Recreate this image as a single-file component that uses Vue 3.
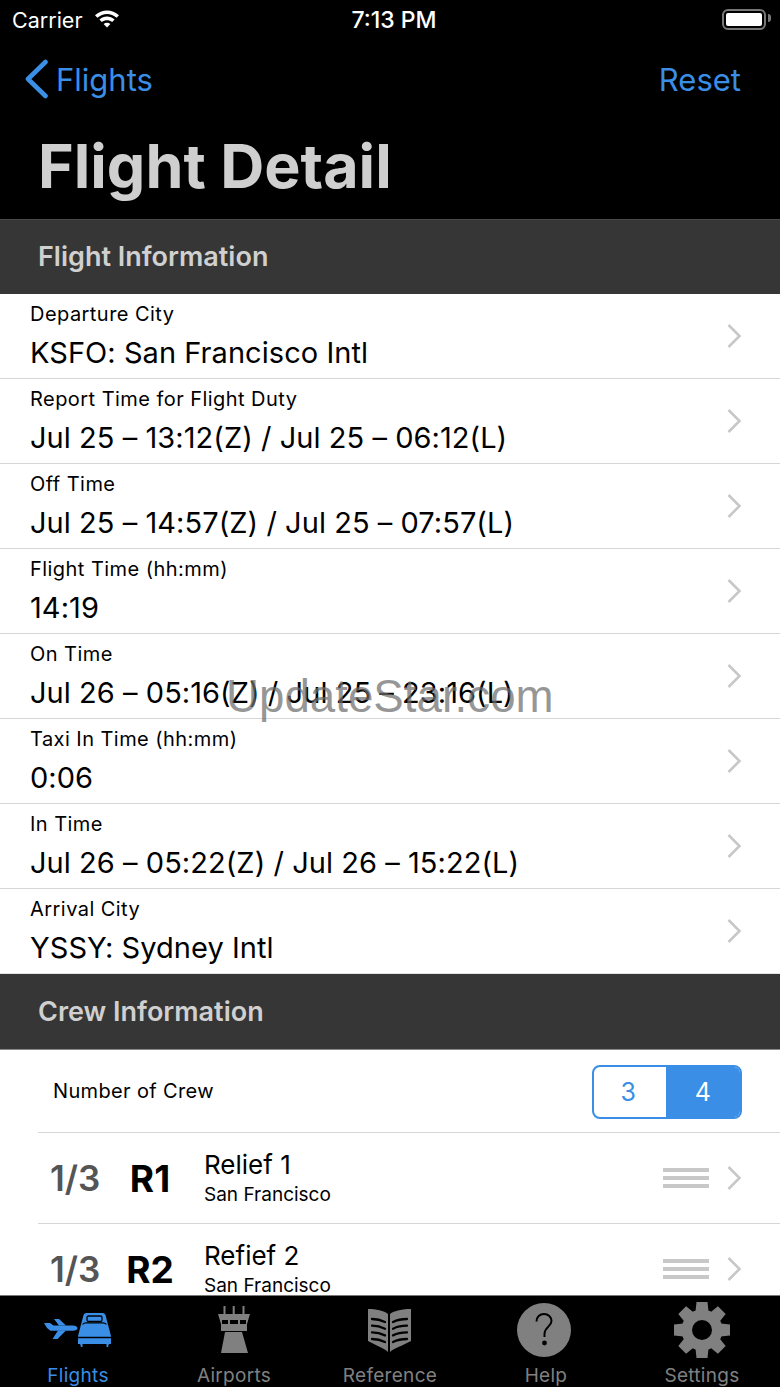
<script setup>
const flightRows = [
  { label: 'Departure City', value: 'KSFO: San Francisco Intl' },
  { label: 'Report Time for Flight Duty', value: 'Jul 25 – 13:12(Z) / Jul 25 – 06:12(L)' },
  { label: 'Off Time', value: 'Jul 25 – 14:57(Z) / Jul 25 – 07:57(L)' },
  { label: 'Flight Time (hh:mm)', value: '14:19' },
  { label: 'On Time', value: 'Jul 26 – 05:16(Z) / Jul 25 – 23:16(L)' },
  { label: 'Taxi In Time (hh:mm)', value: '0:06' },
  { label: 'In Time', value: 'Jul 26 – 05:22(Z) / Jul 26 – 15:22(L)' },
  { label: 'Arrival City', value: 'YSSY: Sydney Intl' }
]
const crew = [
  { frac: '1/3', code: 'R1', name: 'Relief 1', city: 'San Francisco' },
  { frac: '1/3', code: 'R2', name: 'Refief 2', city: 'San Francisco' }
]
const gearTeeth = [0, 45, 90, 135, 180, 225, 270, 315]
</script>

<template>
  <div class="screen">
    <header class="top">
      <div class="status">
        <div class="status-left">
          <span>Carrier</span>
          <svg class="wifi" viewBox="0 0 26 20" width="26" height="20">
            <path d="M1 7.2C7.8.8 18.2.8 25 7.2l-2.4 2.5C17.1 4.6 8.9 4.6 3.4 9.7z" fill="#fff"/>
            <path d="M5.4 11.6c4.4-4 10.8-4 15.2 0l-2.4 2.5c-3.1-2.6-7.3-2.6-10.4 0z" fill="#fff"/>
            <path d="M9.6 15.9c2-1.5 4.8-1.5 6.8 0L13 19.4z" fill="#fff"/>
          </svg>
        </div>
        <span class="clock">7:13 PM</span>
        <div class="battery"><i></i></div>
      </div>
      <div class="nav">
        <div class="back">
          <svg viewBox="0 0 26 40" width="26" height="40">
            <path d="M22.5 3 5 20l17.5 17" fill="none" stroke="#3a8ee6" stroke-width="4.6" stroke-linecap="round" stroke-linejoin="round"/>
          </svg>
          <span>Flights</span>
        </div>
        <span class="reset">Reset</span>
      </div>
      <h1>Flight Detail</h1>
    </header>

    <main class="content">
      <div class="section">Flight Information</div>
      <ul class="rows">
        <li v-for="r in flightRows" :key="r.label" class="row">
          <div class="row-text">
            <div class="row-label">{{ r.label }}</div>
            <div class="row-value">{{ r.value }}</div>
          </div>
          <svg class="chev" viewBox="0 0 16 26" width="16" height="26"><path d="M2.5 2 13.5 13 2.5 24" fill="none" stroke="#c8c8c8" stroke-width="2.6"/></svg>
        </li>
      </ul>

      <div class="section section-crew">Crew Information</div>
      <div class="crew-count">
        <span>Number of Crew</span>
        <div class="seg">
          <span class="seg-off">3</span>
          <span class="seg-on">4</span>
        </div>
      </div>
      <div v-for="c in crew" :key="c.code" class="crew-row">
        <span class="frac">{{ c.frac }}</span>
        <span class="code">{{ c.code }}</span>
        <div class="crew-text">
          <div class="crew-name">{{ c.name }}</div>
          <div class="crew-city">{{ c.city }}</div>
        </div>
        <div class="grip"><i></i><i></i><i></i></div>
        <svg class="chev" viewBox="0 0 16 26" width="16" height="26"><path d="M2.5 2 13.5 13 2.5 24" fill="none" stroke="#c8c8c8" stroke-width="2.6"/></svg>
      </div>
    </main>

    <nav class="tabs">
      <div class="tab active">
        <div class="icon">
          <svg viewBox="0 0 68 34" width="68" height="34">
            <g fill="#3a8ee6">
              <path d="M0 10h6l3.500 2.500H29c2.500 0 4.500 1.300 4.500 2.700s-2 2.500-4.500 2.500H6.500L3 15z"/>
              <path d="M10 6h5l7 6.500h-7z"/>
              <path d="M14 17.500h8L13.500 26H8.500z"/>
              <path d="M42.500 0h16c1.600 0 2.700 1 3.100 2.500L67 23v8H34v-8l5.400-20.500C39.800 1 40.900 0 42.500 0z"/>
              <path d="M36 30.500h2.500V34H37zM62.500 30.500H65L64 34h-1.500z"/>
            </g>
            <rect x="43" y="3" width="15" height="5.500" rx="1.500" fill="none" stroke="#000" stroke-width="1.300"/>
            <path d="M38.500 11.500c1.200-1.500 2.300-1.700 3.500-1.700h17c1.200 0 2.300.2 3.500 1.700" fill="none" stroke="#000" stroke-width="1.200"/>
            <path d="M34 24.500h33" stroke="#000" stroke-width="1.300"/>
          </svg>
        </div>
        <span>Flights</span>
      </div>
      <div class="tab">
        <div class="icon">
          <svg viewBox="0 0 36 48" width="36" height="48">
            <path d="M7.800 0h2v8h-2zM17 0h2v8h-2zM26.800 0h2v8h-2z" transform="translate(-.3)" fill="#808080"/>
            <path d="M2 8h32l-3 10v7H5v-7z" fill="#808080"/>
            <path d="M6 14h6v4H6zM14 14h8v4h-8zM24 14h6v4h-6z" fill="#000"/>
            <path d="M9 26h17l6 21H5z" fill="#808080"/>
          </svg>
        </div>
        <span>Airports</span>
      </div>
      <div class="tab">
        <div class="icon">
          <svg viewBox="0 0 46 44" width="46" height="44">
            <path d="M1 1c8 0 16 1.500 20 5v38c-4-4-12-6.500-20-11z" fill="#808080"/>
            <path d="M23 6c4-3.500 13-5 21-5v32c-8 4.500-17 7-21 11z" fill="#808080"/>
            <g fill="none" stroke="#000" stroke-width="2.300" stroke-linecap="round">
              <path d="M5 11c5 0 9 1 13 3M5 17.700c5 0 9 1 13 3M5 24.400c5 0 9 1 13 3M5 31c5 0 9 1 13 3"/>
              <path d="M40 11c-5 0-10 1-14 3M40 17.700c-5 0-10 1-14 3M40 24.400c-5 0-10 1-14 3M40 31c-5 0-10 1-14 3"/>
            </g>
          </svg>
        </div>
        <span>Reference</span>
      </div>
      <div class="tab">
        <div class="icon icon-help">
          <svg viewBox="0 0 54 54" width="54" height="54">
            <circle cx="27" cy="27" r="27" fill="#808080"/>
            <path d="M19.500 18.500c0-4.500 3.300-7.500 7.500-7.500s7.500 3 7.500 7c0 5.500-7 6-7 13v3" fill="none" stroke="#000" stroke-width="2"/>
            <circle cx="27.500" cy="40" r="2.400" fill="#000"/>
          </svg>
        </div>
        <span>Help</span>
      </div>
      <div class="tab">
        <div class="icon">
          <svg viewBox="0 0 58 58" width="58" height="58">
            <g fill="#808080">
              <path v-for="t in gearTeeth" :key="t" d="M23.500 1h11l1.500 14H22z" :transform="`rotate(${t} 29 29)`"/>
            </g>
            <circle cx="29" cy="29" r="20.500" fill="#808080"/>
            <circle cx="29" cy="29" r="10" fill="#000"/>
          </svg>
        </div>
        <span>Settings</span>
      </div>
    </nav>

    <div class="watermark">UpdateStar.com</div>
  </div>
</template>

<style>
html, body { margin: 0; background: #000; }
</style>

<style scoped>
.screen {
  position: relative;
  width: 780px;
  height: 1387px;
  overflow: hidden;
  display: flex;
  flex-direction: column;
  background: #fff;
  font-family: Inter, "Liberation Sans", sans-serif;
  color: #000;
}
.top {
  flex: none;
  height: 219px;
  background: #000;
  display: flex;
  flex-direction: column;
  box-sizing: border-box;
}
.status {
  height: 40px;
  display: grid;
  grid-template-columns: 1fr auto 1fr;
  align-items: center;
  padding: 0 12px;
  color: #fff;
  font-size: 21.500px;
}
.status-left { display: flex; align-items: center; gap: 12px; margin-top: -1px; }
.wifi { margin-top: -3px; }
.clock { font-weight: 500; font-size: 23px; margin: -1px 0 0 8px; }
.battery {
  justify-self: end;
  position: relative;
  width: 44px;
  height: 21px;
  border: 2.500px solid #777;
  border-radius: 6px;
  padding: 2px;
  box-sizing: border-box;
  margin: -2px 2px 0 0;
}
.battery i { display: block; height: 100%; background: #fff; border-radius: 2px; }
.battery::after {
  content: "";
  position: absolute;
  right: -7px;
  top: 3px;
  width: 3px;
  height: 8px;
  background: #777;
  border-radius: 0 3px 3px 0;
}
.nav {
  height: 78px;
  display: flex;
  justify-content: space-between;
  align-items: center;
  padding: 0 39px 0 23px;
  color: #3a8ee6;
  font-size: 31px;
}
.back { display: flex; align-items: center; gap: 7px; }
h1 {
  margin: 0;
  padding-left: 38px;
  font-size: 61px;
  line-height: 96px;
  font-weight: 700;
  color: #cfcfcf;
}
.content {
  flex: 1;
  min-height: 0;
  overflow: hidden;
}
.section {
  height: 75px;
  background: #363636;
  color: #d0d0d0;
  font-size: 27px;
  font-weight: 600;
  line-height: 73px;
  padding-left: 38px;
  border-top: 1px solid #4a4a4a;
  box-sizing: border-box;
}
.section-crew { height: 77px; line-height: 76px; border-top: 1px solid #e4e4e4; border-bottom: 1px solid #8a8a8a; }
.rows { list-style: none; margin: 0; padding: 0; }
.row {
  height: 85px;
  box-sizing: border-box;
  display: flex;
  align-items: center;
  padding: 0 38px 0 30px;
  border-bottom: 1px solid #d6d6d6;
}
.row:last-child { border-bottom: none; height: 84px; }
.row-text { flex: 1; padding-top: 4px; }
.row-label { font-size: 20px; line-height: 26px; margin-top: -2px; letter-spacing: .45px; }
.row-value { font-size: 29px; line-height: 42px; margin-top: 5px; letter-spacing: .05px; }
.chev { flex: none; }
.crew-count {
  height: 83px;
  margin-left: 38px;
  padding: 0 38px 0 15px;
  display: flex;
  align-items: center;
  justify-content: space-between;
  font-size: 20px;
  letter-spacing: .35px;
  border-bottom: 1px solid #d6d6d6;
  box-sizing: border-box;
}
.seg {
  display: flex;
  width: 150px;
  height: 54px;
  margin-top: 1px;
  border: 2px solid #3a8ee6;
  border-radius: 8px;
  overflow: hidden;
  box-sizing: border-box;
  font-size: 25px;
  color: #3a8ee6;
}
.seg span { display: flex; align-items: center; justify-content: center; }
.seg-off { flex: none; width: 72px; padding-right: 3px; box-sizing: border-box; }
.seg .seg-on { flex: 1; background: #3a8ee6; color: #fff; }
.crew-row {
  height: 91px;
  margin-left: 38px;
  padding-right: 38px;
  display: flex;
  align-items: center;
  border-bottom: 1px solid #d6d6d6;
  box-sizing: border-box;
}
.frac { width: 89px; padding-left: 12px; box-sizing: border-box; font-size: 35px; font-weight: 600; color: #555; }
.code { width: 46px; margin-right: 31px; display: flex; justify-content: center; font-size: 37px; font-weight: 700; }
.crew-text { flex: 1; }
.crew-name { font-size: 26px; line-height: 34px; }
.crew-city { font-size: 19px; line-height: 26px; }
.grip { width: 46px; margin-right: 17px; display: flex; flex-direction: column; gap: 4px; }
.grip i { display: block; height: 4px; background: #c8c8c8; }
.tabs {
  flex: none;
  height: 92px;
  box-sizing: border-box;
  background: #000;
  border-top: 1px solid #777;
  display: grid;
  grid-template-columns: repeat(5, 156px);
  color: #808080;
  font-size: 19px;
}
.tab { display: flex; flex-direction: column; align-items: center; }
.tab span { margin-top: auto; line-height: 26px; padding-bottom: 3px; letter-spacing: .3px; }
.icon { height: 66px; display: flex; align-items: center; justify-content: center; margin-top: 1px; }
.icon-help { margin-left: -4px; }
.tab.active { color: #3a8ee6; }
.watermark {
  position: absolute;
  left: 226px;
  top: 667px;
  font-family: "Liberation Sans", sans-serif;
  font-size: 45.700px;
  line-height: 60px;
  color: rgba(110, 110, 110, .72);
  white-space: nowrap;
  pointer-events: none;
}
</style>
